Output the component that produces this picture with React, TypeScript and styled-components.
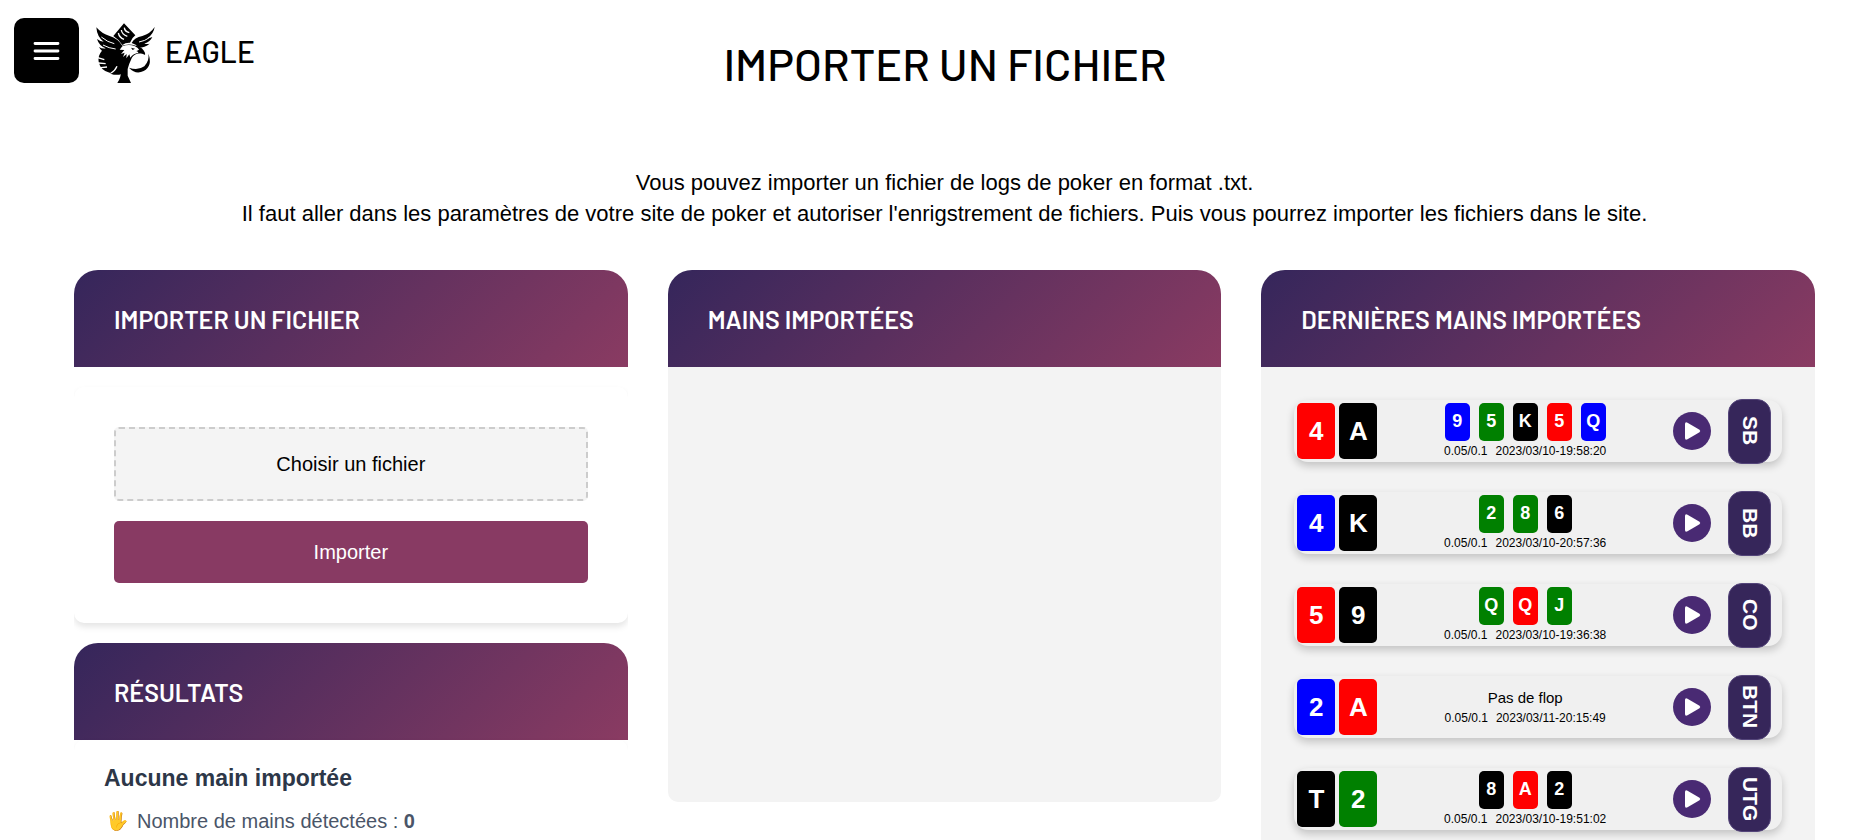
import React from "react";
import styled, { createGlobalStyle } from "styled-components";

const GlobalStyle = createGlobalStyle`
  *, *::before, *::after { box-sizing: border-box; }
  body {
    margin: 0;
    background: #fff;
    color: #000;
    font-family: "Liberation Sans", Arial, Helvetica, sans-serif;
  }
  h1, h2, h3, p, ul { margin: 0; padding: 0; }
  button { font-family: inherit; border: 0; cursor: pointer; }
`;

const display = `Barlow, "Roboto Condensed", sans-serif`;

const suitColors = {
  heart: "#ff0000",
  spade: "#000000",
  diamond: "#0000ff",
  club: "#008000",
} as const;

type Suit = keyof typeof suitColors;
type PlayingCard = [rank: string, suit: Suit];

interface Hand {
  hole: PlayingCard[];
  board: PlayingCard[];
  date: string;
  position: string;
}

const hands: Hand[] = [
  {
    hole: [["4", "heart"], ["A", "spade"]],
    board: [["9", "diamond"], ["5", "club"], ["K", "spade"], ["5", "heart"], ["Q", "diamond"]],
    date: "2023/03/10-19:58:20",
    position: "SB",
  },
  {
    hole: [["4", "diamond"], ["K", "spade"]],
    board: [["2", "club"], ["8", "club"], ["6", "spade"]],
    date: "2023/03/10-20:57:36",
    position: "BB",
  },
  {
    hole: [["5", "heart"], ["9", "spade"]],
    board: [["Q", "club"], ["Q", "heart"], ["J", "club"]],
    date: "2023/03/10-19:36:38",
    position: "CO",
  },
  {
    hole: [["2", "diamond"], ["A", "heart"]],
    board: [],
    date: "2023/03/11-20:15:49",
    position: "BTN",
  },
  {
    hole: [["T", "spade"], ["2", "club"]],
    board: [["8", "spade"], ["A", "heart"], ["2", "spade"]],
    date: "2023/03/10-19:51:02",
    position: "UTG",
  },
];

const Page = styled.div`
  height: 100vh;
  overflow: hidden;
`;

const TopBar = styled.header`
  display: grid;
  grid-template-columns: 1fr auto 1fr;
  align-items: start;
  padding: 18px 0 0 14px;
`;

const Brand = styled.div`
  display: flex;
  align-items: center;
  gap: 16px;
`;

const MenuButton = styled.button`
  display: grid;
  place-items: center;
  width: 65px;
  height: 65px;
  padding: 0;
  border-radius: 10px;
  background: #000;
`;

const HomeLink = styled.a`
  display: flex;
  align-items: center;
  gap: 10px;
  padding-top: 4px;
  color: #000;
  font: 500 30px/36px ${display};
  text-decoration: none;
`;

const BrandName = styled.span`
  padding-bottom: 3px;
`;

const Title = styled.h1`
  padding: 18px 0 0 4px;
  font: 500 45px/54px ${display};
`;

const Intro = styled.p`
  padding: 77px 57px 0 74px;
  font-size: 22px;
  line-height: 31px;
  text-align: center;
`;

const Columns = styled.main`
  display: grid;
  grid-template-columns: repeat(3, minmax(0, 1fr));
  align-items: start;
  gap: 40px;
  padding: 41px 57px 0 74px;
`;

const Card = styled.section<{ $filled?: boolean }>`
  overflow: hidden;
  border-radius: 24px 24px 10px 10px;
  background: ${(p) => (p.$filled ? "#f3f3f3" : "#fff")};
`;

const CardTitle = styled.h2`
  padding: 34px 40px 33px;
  background: linear-gradient(135deg, #35265b, #8a3b62);
  color: #fff;
  font: 600 25px/30px ${display};
`;

const ImportForm = styled.form`
  display: flex;
  flex-direction: column;
  gap: 20px;
  margin: 20px 0;
  padding: 40px;
  border-radius: 10px;
  background: #fff;
  box-shadow: 0 4px 6px rgba(0, 0, 0, 0.1);
`;

const FileLabel = styled.label`
  display: block;
  padding: 24px;
  border: 2px dashed #ccc;
  border-radius: 5px;
  background: #f4f4f4;
  font-size: 20px;
  line-height: 22px;
  text-align: center;
  cursor: pointer;
`;

const FileInput = styled.input`
  display: none;
`;

const SubmitButton = styled.button`
  padding: 20px;
  border-radius: 5px;
  background: #883a63;
  color: #fff;
  font-size: 20px;
  line-height: 22px;
`;

const Results = styled.div`
  padding: 24px 30px;
  border-radius: 10px;
  box-shadow: 0 4px 6px rgba(0, 0, 0, 0.1);
`;

const ResultsTitle = styled.h3`
  color: #2d3748;
  font-size: 23px;
  line-height: 28px;
`;

const ResultLine = styled.p`
  display: flex;
  align-items: center;
  gap: 9px;
  padding-top: 14px;
  color: #4a5568;
  font-size: 20px;
  line-height: 30px;

  strong { font-weight: 700; }
`;

const Emoji = styled.span`
  width: 24px;
  font-size: 18px;
  text-align: right;
`;

const EmptyHands = styled.div`
  min-height: 435px;
`;

const HandList = styled.ul`
  display: flex;
  flex-direction: column;
  gap: 30px;
  padding: 33px;
  list-style: none;
`;

const HandRow = styled.li`
  display: flex;
  align-items: center;
  height: 62px;
  padding: 0 11px 0 3px;
  border-radius: 14px;
  background: #f0f0f0;
  box-shadow: 0 4px 8px rgba(0, 0, 0, 0.2);
`;

const HoleCards = styled.div`
  display: flex;
  gap: 4px;
`;

const HoleCard = styled.span<{ $suit: Suit }>`
  width: 38px;
  border-radius: 5px;
  background: ${(p) => suitColors[p.$suit]};
  color: #fff;
  font-size: 26px;
  font-weight: 700;
  line-height: 56px;
  text-align: center;
`;

const HandInfo = styled.div`
  display: flex;
  flex: 1;
  flex-direction: column;
  align-items: center;
  gap: 2px;
`;

const Board = styled.div`
  display: flex;
  gap: 9px;
`;

const BoardCard = styled.span<{ $suit: Suit }>`
  width: 25px;
  height: 38px;
  border-radius: 5px;
  background: ${(p) => suitColors[p.$suit]};
  color: #fff;
  font-size: 18px;
  font-weight: 700;
  line-height: 36px;
  text-align: center;
`;

const NoFlop = styled.span`
  font-size: 15px;
  line-height: 20px;
`;

const HandMeta = styled.div`
  display: flex;
  gap: 8px;
  font-size: 12px;
  line-height: 16px;
`;

const PlayButton = styled.button`
  display: grid;
  place-items: center;
  width: 38px;
  height: 38px;
  margin-right: 17px;
  padding: 0;
  border-radius: 50%;
  background: #492a73;
`;

const Position = styled.span`
  display: flex;
  align-items: center;
  justify-content: center;
  flex: none;
  width: 43px;
  height: 65px;
  border: 1px solid #54457a;
  border-radius: 14px;
  background: #36265a;
  color: #fff;
  font-size: 21px;
  font-weight: 700;
  writing-mode: vertical-rl;
`;

const MenuIcon = () => (
  <svg width="27" height="20" viewBox="0 0 27 20" aria-hidden="true">
    <path d="M2 2.500h23M2 10h23M2 17.500h23" stroke="#fff" strokeWidth="2.800" strokeLinecap="round" />
  </svg>
);

const PlayIcon = () => (
  <svg width="18" height="20" viewBox="0 0 18 20" aria-hidden="true">
    <path d="M2 3v14q0 2.500 2.500 1.300l12-7q1.500-1.300 0-2.600l-12-7q-2.500-1.200-2.500 1.300z" fill="#fff" />
  </svg>
);

const EagleLogo = () => (
  <svg width="60" height="60" viewBox="14 14 180 180" aria-hidden="true">
    <path d="M101 15L135 51Q125 58 119 73Q106 72 96 80Q84 62 69 53Z" />
    <path
      d="M84 44q3 14 17 19M93 35q2 14 18 19M102 28q1 12 15 15"
      fill="none"
      stroke="#fff"
      strokeWidth="4"
    />
    <path d="M18 27Q34 46 58 53Q82 60 96 82L122 92L104 118L99 150L92 168Q78 172 60 166Q76 160 68 138Q52 124 50 106Q34 102 26 86Q36 92 46 90Q26 82 20 62Q30 70 40 70Q20 56 18 27Z" />
    <path d="M33 56Q52 72 72 76M38 80Q56 90 76 92" fill="none" stroke="#fff" strokeWidth="3" />
    <path d="M193 26Q180 46 156 53Q132 58 124 74Q138 78 144 88Q164 88 178 76Q168 78 162 76Q180 70 186 56Q178 60 172 59Q190 46 193 26Z" />
    <path d="M177 58Q164 68 146 71" fill="none" stroke="#fff" strokeWidth="3" />
    <path d="M36 96Q22 112 25 130Q30 156 58 163Q84 166 98 146L90 104L50 104Z" />
    <path
      d="M22 118L42 124M24 134L46 136M32 148L50 146M62 164Q74 158 80 144"
      fill="none"
      stroke="#fff"
      strokeWidth="4"
    />
    <path d="M92 84Q112 74 136 82Q160 86 165 108Q154 102 140 106Q126 110 122 124Q116 136 112 152L112 172L122 194H81Q94 176 92 150L86 110Z" />
    <path
      d="M96 84Q116 76 134 84Q144 88 147 96L138 98L148 103Q128 104 120 118L117 108L108 120L109 107L98 116L103 103L92 107L102 95L88 94Z"
      fill="#fff"
    />
    <path d="M122 88L134 91L127 95Z" />
    <path d="M142 96L154 95Q164 98 164 110Q156 104 144 104Z" />
    <path d="M174 106Q178 126 162 144Q142 158 116 148Q136 170 160 158Q188 142 174 106Z" />
  </svg>
);

const cardLabel = ([rank, suit]: PlayingCard) => `${rank}-${suit}`;

const HandItem = ({ hand }: { hand: Hand }) => (
  <HandRow>
    <HoleCards>
      {hand.hole.map((card) => (
        <HoleCard key={cardLabel(card)} $suit={card[1]}>{card[0]}</HoleCard>
      ))}
    </HoleCards>
    <HandInfo>
      {hand.board.length > 0 ? (
        <Board>
          {hand.board.map((card) => (
            <BoardCard key={cardLabel(card)} $suit={card[1]}>{card[0]}</BoardCard>
          ))}
        </Board>
      ) : (
        <NoFlop>Pas de flop</NoFlop>
      )}
      <HandMeta>
        <span>0.05/0.1</span>
        <span>{hand.date}</span>
      </HandMeta>
    </HandInfo>
    <PlayButton type="button" aria-label="Rejouer la main">
      <PlayIcon />
    </PlayButton>
    <Position>{hand.position}</Position>
  </HandRow>
);

export default function App() {
  return (
    <Page>
      <GlobalStyle />
      <TopBar>
        <Brand>
          <MenuButton type="button" aria-label="Menu">
            <MenuIcon />
          </MenuButton>
          <HomeLink href="#">
            <EagleLogo />
            <BrandName>EAGLE</BrandName>
          </HomeLink>
        </Brand>
        <Title>IMPORTER UN FICHIER</Title>
      </TopBar>
      <Intro>
        Vous pouvez importer un fichier de logs de poker en format .txt.
        <br />
        Il faut aller dans les paramètres de votre site de poker et autoriser l'enrigstrement de
        fichiers. Puis vous pourrez importer les fichiers dans le site.
      </Intro>
      <Columns>
        <div>
          <Card>
            <CardTitle>IMPORTER UN FICHIER</CardTitle>
            <ImportForm onSubmit={(event) => event.preventDefault()}>
              <FileLabel htmlFor="log-file">Choisir un fichier</FileLabel>
              <FileInput id="log-file" type="file" accept=".txt" />
              <SubmitButton type="submit">Importer</SubmitButton>
            </ImportForm>
          </Card>
          <Card>
            <CardTitle>RÉSULTATS</CardTitle>
            <Results>
              <ResultsTitle>Aucune main importée</ResultsTitle>
              <ResultLine>
                <Emoji>🖐</Emoji>
                <span>
                  Nombre de mains détectées : <strong>0</strong>
                </span>
              </ResultLine>
            </Results>
          </Card>
        </div>
        <Card $filled>
          <CardTitle>MAINS IMPORTÉES</CardTitle>
          <EmptyHands />
        </Card>
        <Card $filled>
          <CardTitle>DERNIÈRES MAINS IMPORTÉES</CardTitle>
          <HandList>
            {hands.map((hand) => (
              <HandItem key={hand.date} hand={hand} />
            ))}
          </HandList>
        </Card>
      </Columns>
    </Page>
  );
}
